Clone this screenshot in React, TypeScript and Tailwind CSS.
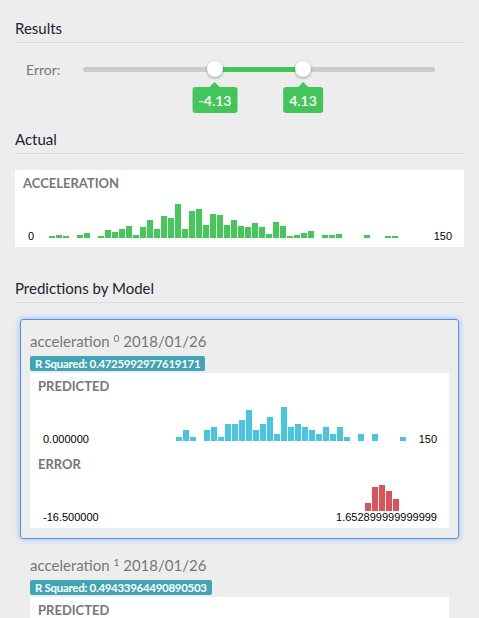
import React from "react";

// histogram bins, heights in px
const actualBins = [2, 3, 2, 0, 3, 5, 0, 2, 8, 6, 9, 12, 3, 11, 18, 9, 22, 20, 34, 9, 27, 29, 13, 24, 23, 13, 18, 12, 11, 15, 11, 4, 16, 12, 2, 3, 5, 7, 0, 3, 3, 4, 0, 0, 0, 3, 0, 0, 2, 2];
const predictedBins = [4, 11, 4, 0, 11, 14, 4, 17, 17, 21, 31, 11, 17, 24, 7, 34, 14, 17, 14, 11, 7, 14, 7, 14, 4, 0, 7, 0, 7, 0, 0, 0, 4];
const errorBins = [8, 24, 26, 20, 12];

function Bars({ bins, height, color }: { bins: number[]; height: number; color: string }) {
  const width = bins.length * 7 - 1;
  return (
    <svg width={width} height={height} className="block shrink-0">
      {bins.map((h, i) =>
        h > 0 ? <rect key={i} x={i * 7} y={height - h} width={6} height={h} fill={color} /> : null
      )}
    </svg>
  );
}

function Heading({ children, top }: { children: React.ReactNode; top: string }) {
  return (
    <div className={`${top} border-b border-[#dcdcdc] pb-[4px] text-[15px] leading-[20px] text-[#222230]`}>
      {children}
    </div>
  );
}

function Handle({ left, label }: { left: string; label: string }) {
  return (
    <div className={`absolute top-1/2 ${left}`}>
      <div className="absolute h-[16px] w-[16px] -translate-x-1/2 -translate-y-1/2 rounded-full bg-white shadow-[0_1px_3px_rgba(0,0,0,0.35)]" />
      <div className="absolute top-[18px] -translate-x-1/2 flex flex-col items-center">
        <div className="h-0 w-0 -mt-[5px] border-x-[5px] border-b-[5px] border-x-transparent border-b-[#43c55b]" />
        <div className="flex h-[26px] items-center rounded-[3px] bg-[#43c55b] px-[6px] text-[14px] font-semibold text-white">
          {label}
        </div>
      </div>
    </div>
  );
}

function ModelCard({ index, rsq, selected }: { index: number; rsq: string; selected?: boolean }) {
  return (
    <div
      className={`rounded-[3px] border px-[9px] pt-[11px] pb-[10px] ${
        selected
          ? "border-[#4d8ffd] shadow-[0_0_6px_rgba(77,143,253,0.55)]"
          : "border-transparent"
      }`}
    >
      <div className="text-[15px] leading-[20px] text-[#777]">
        acceleration <sup className="text-[10px]">{index}</sup> 2018/01/26
      </div>
      <div className="mt-[5px] w-fit rounded-[2px] bg-[#40a3b6] px-[5px] text-[11.5px] font-bold leading-[15px] tracking-[-0.3px] text-white">
        R Squared: {rsq}
      </div>
      <div className="mt-[2px] bg-white pt-[5px] pb-[5px]">
        <div className="pl-[8px] text-[13px] font-bold leading-[16px] text-[#777]">PREDICTED</div>
        <div className="flex h-[51px] items-end pl-[13px] pr-[12px] font-['Liberation_Sans',sans-serif] text-[11px] leading-[12px] text-black">
          <span className="w-[133px]">0.000000</span>
          <div className="mb-[4px]">
            <Bars bins={predictedBins} height={36} color="#48c5e0" />
          </div>
          <span className="ml-auto">150</span>
        </div>
        <div className="mt-[11px] pl-[8px] text-[13px] font-bold leading-[16px] text-[#777]">ERROR</div>
        <div className="mt-[11px] pl-[335px]">
          <Bars bins={errorBins} height={28} color="#d8545a" />
        </div>
        <div className="flex justify-between pl-[13px] pr-[12px] font-['Liberation_Sans',sans-serif] text-[11px] leading-[12px] text-black">
          <span>-16.500000</span>
          <span>1.652899999999999</span>
        </div>
      </div>
    </div>
  );
}

export default function App() {
  return (
    <div className="min-h-screen bg-[#ededed] px-[15px] pt-[18px] pb-[20px] font-['Lato','Noto_Sans',sans-serif]">
      <Heading top="">Results</Heading>

      {/* error range slider */}
      <div className="mt-[18px] flex h-[16px] items-center">
        <div className="w-[68px] pl-[11px] text-[14px] text-[#777]">Error:</div>
        <div className="relative mr-[29px] h-[5px] flex-1 rounded-full bg-[#cccccc]">
          <div className="absolute left-[37.5%] right-[37.5%] h-full bg-[#43c55b]" />
          <Handle left="left-[37.5%]" label="-4.13" />
          <Handle left="left-[62.5%]" label="4.13" />
        </div>
      </div>

      <Heading top="mt-[52px]">Actual</Heading>
      <div className="mt-[16px] bg-white pt-[5px] pb-[5px]">
        <div className="pl-[8px] text-[13px] font-bold leading-[16px] text-[#777]">ACCELERATION</div>
        <div className="flex h-[51px] items-end pl-[13px] pr-[12px] font-['Liberation_Sans',sans-serif] text-[11px] leading-[12px] text-black">
          <span className="w-[21px]">0</span>
          <div className="mb-[4px]">
            <Bars bins={actualBins} height={36} color="#45c85a" />
          </div>
          <span className="ml-auto">150</span>
        </div>
      </div>

      <Heading top="mt-[31px]">Predictions by Model</Heading>
      <div className="mt-[16px] px-[5px]">
        <ModelCard index={0} rsq="0.4725992977619171" selected />
        <div className="mt-[4px]">
          <ModelCard index={1} rsq="0.49433964490890503" />
        </div>
      </div>
    </div>
  );
}
